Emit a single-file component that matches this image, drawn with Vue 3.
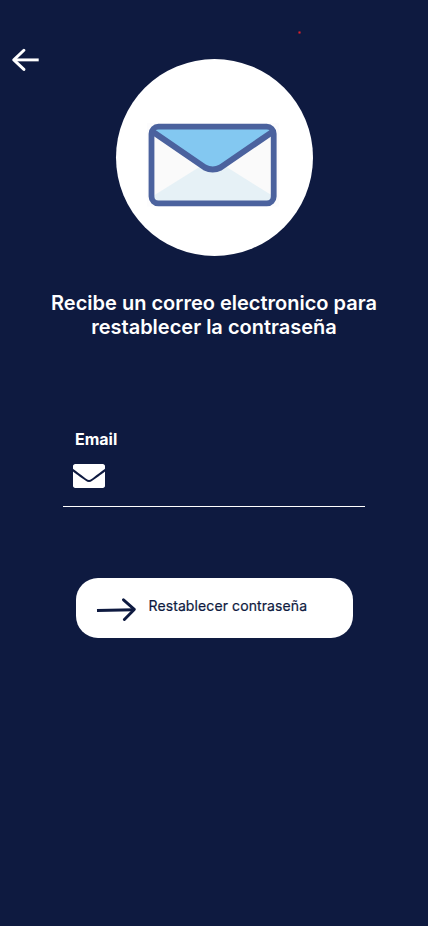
<script setup>
import { ref } from 'vue'

const email = ref('')
</script>

<template>
  <main class="screen">
    <header class="top">
      <button class="back" type="button" aria-label="Volver">
        <svg width="28" height="24" viewBox="0 0 28 24" fill="none" stroke="#fff" stroke-width="2.9">
          <path d="M26.700 11.900H2" />
          <path d="M11.900 2.300L1.800 11.900l10.100 9.500" stroke-linecap="round" stroke-linejoin="round" />
        </svg>
      </button>
      <span class="dot"></span>
    </header>

    <div class="badge">
      <svg width="132" height="84" viewBox="0 0 132 84">
        <rect width="132" height="83.5" fill="#fcfcfd" />
        <rect x="4.2" y="3.5" width="122.6" height="77" rx="7" fill="#fafafa" />
        <path d="M6 73L54 43h24l48 30v7H6z" fill="#e6f1f6" />
        <path d="M6 6h119L71 45q-5.300 3-10.600 0z" fill="#83c8f1" />
        <path d="M5 8.200L57.800 44.500Q65.700 48.600 73.600 44.500L126.400 8.200" fill="none" stroke="#4b629e" stroke-width="6.100" />
        <rect x="4.500" y="3.700" width="122.200" height="76.700" rx="7" fill="none" stroke="#4b629e" stroke-width="5.800" />
      </svg>
    </div>

    <h1 class="title">Recibe un correo electronico para<br />restablecer la contraseña</h1>

    <form class="form" @submit.prevent>
      <label class="label" for="email">Email</label>
      <div class="field">
        <svg width="32" height="24" viewBox="0 64 512 384" fill="#fff">
          <path d="M502.300 190.800c3.900-3.100 9.700-.2 9.700 4.700V412c0 20-16 36-36 36H36c-20 0-36-16-36-36V195.600c0-5 5.700-7.800 9.700-4.700 22.400 17.400 52.100 39.500 154.100 113.600 21.100 15.400 56.700 47.800 92.200 47.600 35.700.3 72-32.800 92.300-47.600 102-74.100 131.600-96.300 154-113.700zM256 320c23.200.4 56.600-29.200 73.400-41.400 132.700-96.300 142.800-104.700 173.400-128.700 5.800-4.500 9.200-11.500 9.200-18.900V100c0-20-16-36-36-36H36c-20 0-36 16-36 36v31c0 7.400 3.400 14.300 9.200 18.900 30.600 23.900 40.700 32.400 173.400 128.700 16.800 12.200 50.200 41.800 73.400 41.400z" />
        </svg>
        <input id="email" v-model="email" class="input" type="email" />
      </div>
      <button class="submit" type="submit">
        <svg width="40" height="24" viewBox="0 0 40 24" fill="none" stroke="#0e1a40" stroke-width="2.900">
          <path d="M1 12.500L38 11.700" />
          <path d="M27.500 1.800L38.300 11.400L28.400 21.400" stroke-linecap="round" stroke-linejoin="round" />
        </svg>
        <span class="submit-text">Restablecer contraseña</span>
      </button>
    </form>
  </main>
</template>

<style>
body {
  background: #0e1a40;
}
</style>

<style scoped>
.screen {
  box-sizing: border-box;
  display: flex;
  flex-direction: column;
  align-items: center;
  width: 428px;
  height: 926px;
  background: #0e1a40;
  color: #fff;
  font-family: Inter, sans-serif;
}

.top {
  position: relative;
  box-sizing: border-box;
  width: 100%;
  height: 59px;
  padding: 48px 0 0 12px;
}

.back {
  display: block;
  padding: 0;
  border: 0;
  background: none;
}

.back svg {
  display: block;
}

.dot {
  position: absolute;
  left: 298px;
  top: 31px;
  width: 3px;
  height: 3px;
  background: radial-gradient(circle, #e0202a 20%, rgba(200, 32, 44, 0.25) 70%);
}

.badge {
  box-sizing: border-box;
  width: 197px;
  height: 197px;
  margin-left: 1px;
  padding: 64px 0 0 31px;
  border-radius: 50%;
  background: #fff;
}

.badge svg {
  display: block;
}

.title {
  margin: 35px 0 0;
  font-size: 20px;
  line-height: 24px;
  font-weight: 600;
  text-align: center;
  white-space: nowrap;
}

.form {
  display: flex;
  flex-direction: column;
  width: 302px;
  margin-top: 90px;
}

.label {
  padding-left: 12px;
  font-size: 16px;
  line-height: 20px;
  font-weight: 700;
}

.field {
  box-sizing: border-box;
  display: flex;
  align-items: flex-start;
  gap: 12px;
  height: 58px;
  padding: 15px 0 0 10px;
  border-bottom: 1px solid #fff;
}

.input {
  flex: 1;
  min-width: 0;
  height: 24px;
  padding: 0;
  border: 0;
  outline: 0;
  background: none;
  color: #fff;
  font: 400 16px Inter, sans-serif;
}

.submit {
  box-sizing: border-box;
  display: flex;
  align-items: center;
  gap: 12.500px;
  width: 277px;
  height: 60px;
  margin: 71px 0 0 13px;
  padding: 3px 0 0 20px;
  border: 0;
  border-radius: 22px;
  background: #fff;
  color: #0e1a40;
}

.submit-text {
  margin-top: -8px;
  font: 400 14px/17px Inter, sans-serif;
  letter-spacing: 0.1px;
  -webkit-text-stroke: 0.2px #0e1a40;
  white-space: nowrap;
}
</style>
